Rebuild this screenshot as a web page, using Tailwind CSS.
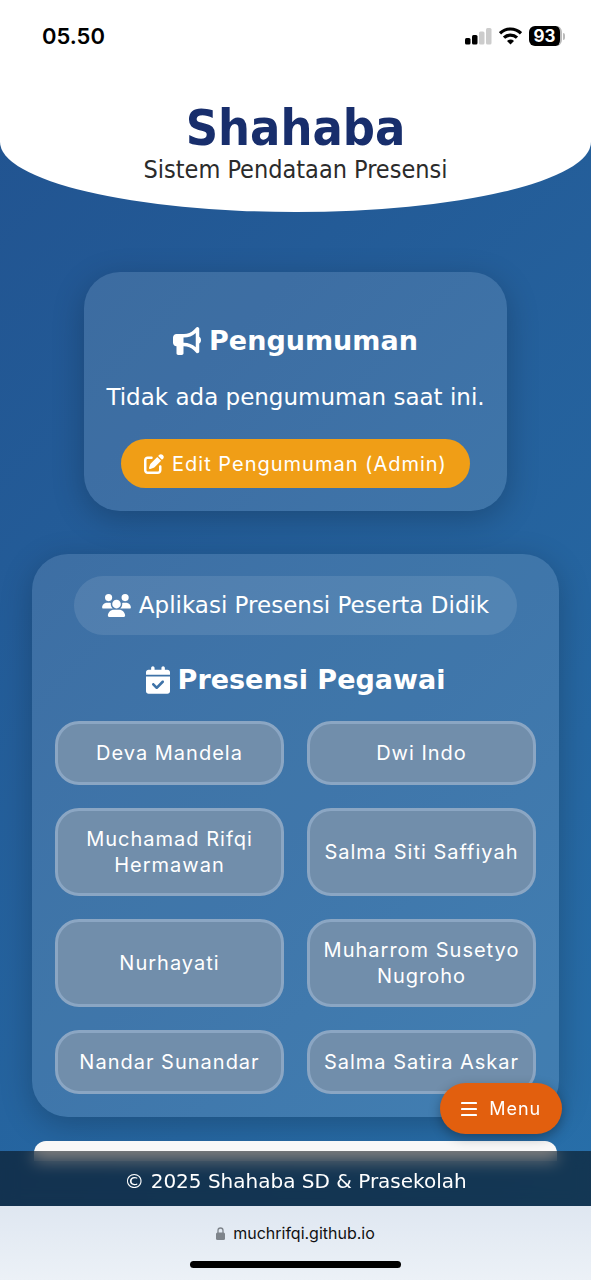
<!DOCTYPE html>
<html lang="id">
<head>
<meta charset="utf-8">
<meta name="viewport" content="width=device-width, initial-scale=1">
<title>Shahaba - Sistem Pendataan Presensi</title>
<script src="https://cdn.jsdelivr.net/npm/@tailwindcss/browser@4"></script>
</head>
<body class="min-h-screen bg-linear-135 from-[#21528f] to-[#2870aa] font-['DejaVu_Sans',sans-serif] text-white">
<header class="rounded-b-[50%_70px] bg-white pb-7 text-center">
  <div class="flex h-18 items-center justify-between pl-[42px] pr-[26px] font-['Inter',sans-serif] text-black">
    <time class="text-[22px] font-semibold">05.50</time>
    <div class="flex items-center gap-[7px]">
      <svg class="h-[18px] w-[27px]" viewBox="0 0 27 18" role="img" aria-label="Sinyal"><rect x="0" y="11" width="5.5" height="6.5" rx="1.5"/><rect x="7" y="8" width="5.5" height="9.5" rx="1.5"/><rect x="14" y="4.500" width="5.5" height="13" rx="1.500" fill="#ccc"/><rect x="21" y="1" width="5.5" height="16.500" rx="1.500" fill="#ccc"/></svg>
      <svg class="h-[18px] w-[23px]" viewBox="0 0 23 18" fill="none" stroke="#000" stroke-width="3.200" role="img" aria-label="Wi-Fi"><path d="M1 6.300a15 15 0 0 1 21 0"/><path d="M5 10.700a9.300 9.300 0 0 1 13 0"/><path d="M11.500 17.500 8 14a5 5 0 0 1 7 0Z" fill="#000" stroke="none"/></svg>
      <div class="flex items-center gap-px">
        <span class="flex h-[20px] w-[33px] items-center justify-center rounded-md border-r-2 border-[#bbb] bg-black text-[17px] font-bold leading-none text-white">93</span>
        <span class="h-[7px] w-[2px] rounded-r bg-[#bbb]"></span>
      </div>
    </div>
  </div>
  <h1 class="mt-7 font-['DejaVu_Sans_Condensed','DejaVu_Sans',sans-serif] text-[50px] font-bold leading-14 text-[#182e6c]">Shahaba</h1>
  <p class="font-['DejaVu_Sans_Condensed','DejaVu_Sans',sans-serif] text-[25px] leading-7 text-[#2b2b2b]">Sistem Pendataan Presensi</p>
</header>

<main class="flex flex-col items-center px-8 pt-15">
  <section class="flex flex-col items-center rounded-[36px] bg-white/12 px-[22px] pb-[23px] pt-[51px] shadow-[0_8px_32px_rgba(0,0,0,0.22)]">
    <h2 class="flex items-center gap-2 text-[27px] font-bold leading-9">
      <svg class="size-7" viewBox="0 0 512 512" fill="currentColor" aria-hidden="true"><path d="M480 32c0-12.900-7.800-24.600-19.800-29.600s-25.700-2.200-34.900 6.900L381.700 53c-48 48-113.100 75-181 75H64c-35.300 0-64 28.700-64 64v96c0 35.300 28.700 64 64 64v128c0 17.700 14.300 32 32 32h64c17.700 0 32-14.300 32-32V352h8.700c67.900 0 133 27 181 75l43.600 43.600c9.200 9.200 22.900 11.900 34.900 6.900s19.800-16.600 19.800-29.600V300.400c18.600-8.800 32-32.500 32-60.400s-13.400-51.600-32-60.400V32zm-64 76.700V371.300C357.200 317.800 280.500 288 200.700 288H192v-96h8.700c79.800 0 156.500-29.800 215.300-83.300z"/></svg>
      Pengumuman
    </h2>
    <p class="mt-5 text-[23px] leading-9">Tidak ada pengumuman saat ini.</p>
    <button type="button" class="mt-6 flex h-[49px] items-center gap-2 rounded-full bg-[#f09e16] px-[23px] font-['Inter',sans-serif] text-[20px] tracking-wider">
      <svg class="size-5" viewBox="0 0 512 512" fill="currentColor" aria-hidden="true"><path d="M471.600 21.700c-21.900-21.900-57.300-21.900-79.200 0L362.300 51.700l97.900 97.900 30.100-30.100c21.900-21.900 21.900-57.300 0-79.200L471.600 21.700zm-299.200 220c-6.100 6.100-10.800 13.600-13.500 21.900l-29.600 88.800c-2.900 8.600-.6 18.100 5.800 24.600s15.900 8.700 24.600 5.800l88.800-29.600c8.200-2.700 15.700-7.400 21.900-13.500L437.700 172.300 339.700 74.300 172.400 241.700zM96 64c-53 0-96 43-96 96V416c0 53 43 96 96 96H352c53 0 96-43 96-96V320c0-17.700-14.300-32-32-32s-32 14.300-32 32v96c0 17.700-14.300 32-32 32H96c-17.700 0-32-14.300-32-32V160c0-17.700 14.300-32 32-32h96c17.700 0 32-14.300 32-32s-14.300-32-32-32H96z"/></svg>
      Edit Pengumuman (Admin)
    </button>
  </section>

  <section class="mt-[43px] flex w-full flex-col items-center rounded-[36px] bg-white/12 px-[23px] pb-[23px] pt-[22px] shadow-[0_8px_32px_rgba(0,0,0,0.22)]">
    <a href="#peserta-didik" class="flex h-[59px] items-center gap-2 rounded-full bg-white/10 px-7 text-[23px]">
      <svg class="h-[23px] w-[29px]" viewBox="0 0 640 512" fill="currentColor" aria-hidden="true"><path d="M144 0a80 80 0 1 1 0 160A80 80 0 1 1 144 0zM512 0a80 80 0 1 1 0 160A80 80 0 1 1 512 0zM0 298.700C0 239.800 47.800 192 106.700 192h42.700c15.900 0 31 3.500 44.600 9.700-1.300 7.200-1.900 14.700-1.900 22.300 0 38.200 16.800 72.500 43.300 96H21.300C9.600 320 0 310.400 0 298.700zM405.300 320h-.7c26.600-23.500 43.300-57.800 43.300-96 0-7.600-.7-15-1.900-22.300 13.600-6.300 28.700-9.700 44.600-9.700h42.700C592.200 192 640 239.800 640 298.700c0 11.800-9.600 21.300-21.300 21.300H405.300zM224 224a96 96 0 1 1 192 0 96 96 0 1 1-192 0zM128 485.300C128 411.700 187.700 352 261.300 352h117.400C452.300 352 512 411.700 512 485.300c0 14.700-11.900 26.700-26.700 26.700H154.700c-14.700 0-26.700-11.900-26.700-26.700z"/></svg>
      Aplikasi Presensi Peserta Didik
    </a>
    <h2 class="mt-[27px] flex items-center gap-2 text-[27px] font-bold leading-9">
      <svg class="h-7 w-6" viewBox="0 0 448 512" fill="currentColor" aria-hidden="true"><path d="M128 0c17.700 0 32 14.300 32 32v32h128V32c0-17.700 14.300-32 32-32s32 14.300 32 32v32h48c26.500 0 48 21.500 48 48v48H0v-48C0 85.500 21.500 64 48 64h48V32c0-17.700 14.300-32 32-32zM0 192h448v272c0 26.500-21.500 48-48 48H48c-26.500 0-48-21.500-48-48V192zm329 113c9.400-9.400 9.400-24.600 0-33.900s-24.600-9.400-33.900 0l-95 95-47-47c-9.400-9.400-24.600-9.400-33.900 0s-9.400 24.600 0 33.900l64 64c9.400 9.400 24.600 9.400 33.900 0L329 305z"/></svg>
      Presensi Pegawai
    </h2>
    <div class="mt-[23px] grid w-full grid-cols-2 gap-[23px] font-['Inter',sans-serif] text-[20px] leading-[26px] tracking-wider">
      <button type="button" class="min-h-16 rounded-3xl border-3 border-[#8ba6c3] bg-[#718eab] px-3 py-[15px]">Deva Mandela</button>
      <button type="button" class="min-h-16 rounded-3xl border-3 border-[#8ba6c3] bg-[#718eab] px-3 py-[15px]">Dwi Indo</button>
      <button type="button" class="min-h-16 rounded-3xl border-3 border-[#8ba6c3] bg-[#718eab] px-3 py-[15px]">Muchamad Rifqi Hermawan</button>
      <button type="button" class="min-h-16 rounded-3xl border-3 border-[#8ba6c3] bg-[#718eab] px-3 py-[15px]">Salma Siti Saffiyah</button>
      <button type="button" class="min-h-16 rounded-3xl border-3 border-[#8ba6c3] bg-[#718eab] px-3 py-[15px]">Nurhayati</button>
      <button type="button" class="min-h-16 rounded-3xl border-3 border-[#8ba6c3] bg-[#718eab] px-3 py-[15px]">Muharrom Susetyo Nugroho</button>
      <button type="button" class="min-h-16 rounded-3xl border-3 border-[#8ba6c3] bg-[#718eab] px-3 py-[15px]">Nandar Sunandar</button>
      <button type="button" class="min-h-16 rounded-3xl border-3 border-[#8ba6c3] bg-[#718eab] px-3 py-[15px]">Salma Satira Askar</button>
    </div>
  </section>
  <div class="mt-6 w-full px-[2px]"><div class="h-5 rounded-t-xl bg-[#f8f8f8]"></div></div>
</main>

<button type="button" class="fixed bottom-[146px] right-[29px] z-20 flex h-[51px] items-center gap-3 rounded-full bg-[#e25f0e] px-[21px] font-['Inter',sans-serif] text-[18px] tracking-wider shadow-[0_4px_12px_rgba(0,0,0,0.3)]">
  <svg class="h-4 w-4" viewBox="0 0 16 16" stroke="currentColor" stroke-width="2.200" stroke-linecap="round" aria-hidden="true"><path d="M1 2h14M1 8h14M1 14h14"/></svg>
  Menu
</button>

<div class="fixed inset-x-0 bottom-0 z-10">
  <footer class="flex h-[55px] items-center justify-center bg-black/50 pt-1 text-[20px] backdrop-blur-sm">© 2025 Shahaba SD &amp; Prasekolah</footer>
  <div class="flex h-[74px] flex-col items-center justify-between bg-linear-to-b from-[#dfe7f1] to-[#ecf1f7] pb-3 pt-[15px] font-['Inter',sans-serif]">
    <a href="https://muchrifqi.github.io" class="flex items-center gap-2 text-base text-[#111]">
      <svg class="h-[13px] w-[9px]" viewBox="0 0 9 13" aria-hidden="true"><rect y="5.500" width="9" height="7.500" rx="1.500" fill="#7e848b"/><path d="M2 6V3.500a2.500 2.500 0 0 1 5 0V6" fill="none" stroke="#7e848b" stroke-width="1.300"/></svg>
      muchrifqi.github.io
    </a>
    <span class="h-[7px] w-[211px] rounded-full bg-black"></span>
  </div>
</div>
</body>
</html>
